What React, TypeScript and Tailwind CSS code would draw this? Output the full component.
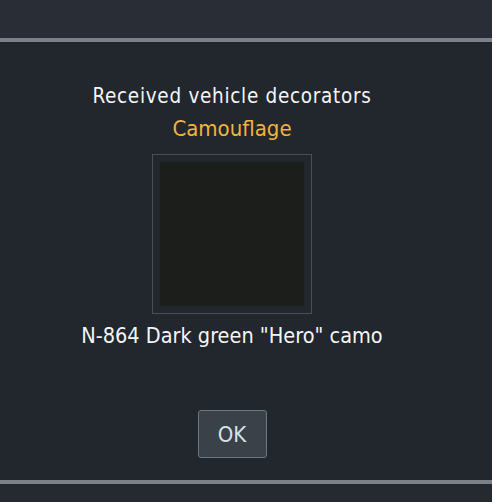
export default function App() {
  return (
    <div
      className="w-[492px] h-[502px] flex flex-col bg-[#22262d] overflow-hidden"
      style={{ fontFamily: '"DejaVu Sans Condensed", "DejaVu Sans", sans-serif' }}
    >
      {/* strip above the dialog */}
      <div className="h-[38px] bg-[#292d36]" />
      <div className="h-[4px] bg-[#7d8085]" />

      {/* dialog body */}
      <div className="h-[438px] flex flex-col items-center pr-[28px] pt-[40px]">
        <div className="text-[20.5px] leading-[28px] tracking-[0.7px] text-[#f4f5f6]">Received vehicle decorators</div>
        <div className="mt-[5px] text-[22px] leading-[28px] text-[#f2b33c]">Camouflage</div>
        <div className="mt-[11px] w-[160px] h-[160px] border border-[#4b4e53] p-[7px]">
          <div className="w-full h-full bg-[#1b1e1a]" />
        </div>
        <div className="mt-[8px] text-[21.5px] leading-[28px] text-[#f4f5f6]">
          N-864 Dark green "Hero" camo
        </div>
        <button className="mt-[60px] w-[69px] h-[48px] rounded-[3px] border border-[#6a7780] bg-[#3a4149] text-[22px] text-[#d6e2e8]">
          OK
        </button>
      </div>

      <div className="h-[4px] bg-[#7d8085]" />
      <div className="flex-1 bg-[#252930]" />
    </div>
  );
}
